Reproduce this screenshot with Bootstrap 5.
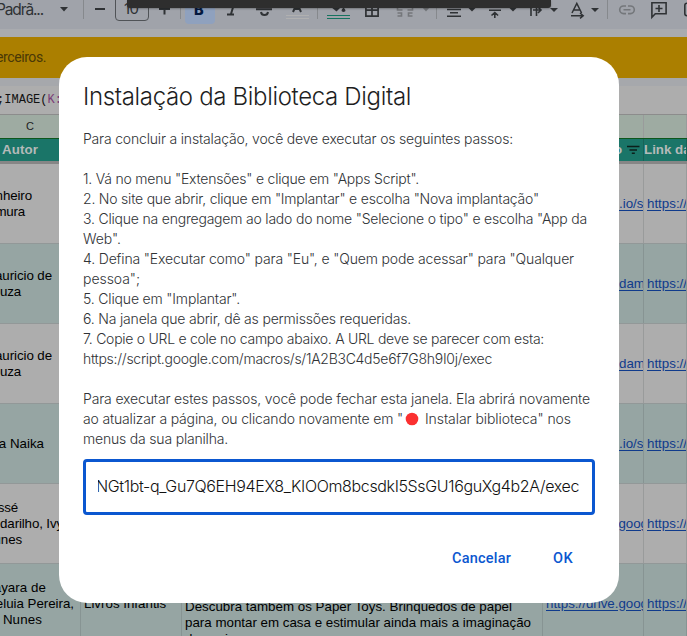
<!DOCTYPE html>
<html lang="pt-BR">
<head>
<meta charset="utf-8">
<title>Instalação da Biblioteca Digital</title>
<link href="https://cdn.jsdelivr.net/npm/bootstrap@5.3.0/dist/css/bootstrap.min.css" rel="stylesheet">
<style>
body{width:687px;height:636px;overflow:hidden;background:#adadad;font-family:"Liberation Sans",Arial,sans-serif;color:#000}
.sheet{width:687px;height:636px;overflow:hidden}
.sheet>div{flex:none}
.tools{height:29px;background:#a0a3aa}
.tools svg{display:block;flex:none}
.fontname{width:59px;font:15.500px/19px Inter,sans-serif;color:#2f3235;overflow:hidden;white-space:nowrap}
.fontname span{margin-left:-4px}
.fit{display:inline-block;white-space:pre}
.strip{height:8px;background:#a9abaf}
.notice{height:41px;background:#ab7f00;font:14px/41px Roboto,sans-serif;color:#493807}
.notice span{margin-left:-4px}
.strip2{height:8px;background:#a6a8ac}
.formula{height:28px;font:12px/29px "Liberation Mono",monospace;color:#111;background:#adadad}
.formula .fit{margin-left:-3px}
.range-ref{color:#7a3a75}
.grid-row{display:grid;grid-template-columns:81px 101px 361px 101px 43px;flex:none}
.grid-row>div{overflow:hidden;border-right:1px solid #999b9b;white-space:nowrap}
.letters{height:25px;border-top:1px solid #8c8c8c;background:#9eaba2;border-bottom:1px solid #0c571c;font-size:11px;line-height:23px;color:#222}
.letters span{margin-left:26px}
.heads{height:22px;background:#1a7568;font-weight:700;font-size:13.330px;line-height:21px;color:#b5bab9}
.heads>div{border-color:#176257}
.heads .fit{margin-left:2px}
.frozen{height:3px;background:#868686}
.data-row{height:80px;border-bottom:1px solid #929898;font-size:13.33px;line-height:16px}
.data-row>div{display:flex;flex-direction:column;justify-content:center}
.teal-row{background:#96a5a3}
.teal-row>div{border-color:#879493}
.author span{margin-left:-16px;align-self:flex-start}
.url{color:#103b8c;text-decoration:underline;text-underline-offset:2px;padding-left:3px}
.url span{align-self:flex-start}
.tail{padding-left:76px}
.desc{padding:35px 0 0 3px;justify-content:flex-start!important}
.desc span{align-self:flex-start}
.tip{width:424px;height:8px;left:127px;top:0;background:#2e2e2e;border-radius:0 0 3px 3px;box-shadow:0 1px 2px #0004}
.dialog-box{left:59px;top:57px;width:560px;height:546px;border-radius:28px;background:#fff;padding:24px;font-family:Inter,Roboto,sans-serif;color:#303336}
.dialog-title{font-size:24px;line-height:32px;font-weight:300;color:#1f1f1f;margin-bottom:16px}
.steps{font-size:14px;line-height:20px;font-weight:300}
.steps>div{height:20px;white-space:nowrap}
.address{height:56px;margin-top:10px;border:3px solid #0b57d0;border-radius:4px;padding:0 13px 0 12px;font-size:16px;font-weight:300;line-height:49px;color:#111}
.address>div{overflow:hidden;justify-content:flex-end}
.actions{margin-top:24px;gap:42px;padding-right:22px;font:500 14.500px/40px Roboto,sans-serif;color:#0b57d0}
</style>
<script src="https://cdn.jsdelivr.net/npm/bootstrap@5.3.0/dist/js/bootstrap.bundle.min.js"></script>
</head>
<body class="position-relative">
<div class="sheet d-flex flex-column">
  <div class="tools d-flex">
    <div class="fontname"><span class="fit" data-w="47">Padrã...</span></div>
    <svg width="125" height="29" viewBox="59 0 125 29" fill="none" stroke="#2f3235" stroke-width="2"><path d="M60 7h8l-4 4.500z" fill="#2f3235" stroke="none"/><path d="M83.500 0v19M180.500 0v19" stroke="#86898d" stroke-width="1"/><path d="M95 9h10M159 9h11M164.500 3.500v11"/><path d="M115.500 0v17q0 3.500 3.500 3.500h26q3.500 0 3.500-3.500V0" stroke="#505357" stroke-width="1"/><text x="124" y="14" font-family="Inter" font-size="15" letter-spacing="-.7" fill="#2f3235" stroke="none">10</text></svg>
    <svg width="72" height="29" viewBox="184 0 72 29"><rect x="185" y="-6" width="30" height="30" rx="4" fill="#8fa1be"/><text x="194" y="15" font-family="Inter" font-weight="800" font-size="14.500" fill="#04183f">B</text><path d="M227 14.500h7M231 14l3-10" stroke="#2f3235" stroke-width="2" fill="none"/></svg>
    <svg width="62" height="29" viewBox="256 0 62 29" fill="none" stroke="#2f3235" stroke-width="2"><path d="M256 9.200h16M261 12q.500 3 3.500 3t3.500-3"/><path d="M293 12l4-9 4 9M294.500 9h5"/><path d="M286 15.500h23M286 18.500h23" stroke="#b0b0b0" stroke-width="1"/><path d="M317.500 0v19" stroke="#86898d" stroke-width="1"/></svg>
    <svg width="122" height="29" viewBox="318 0 122 29" fill="none" stroke="#2f3235" stroke-width="1.700"><path d="M331 7h10l-4.500 4.500z" fill="#2f3235" stroke="none"/><path d="M343.500 7.500q4 4 0 4.500q-4-.5 0-4.500z" fill="#2f3235" stroke="none"/><path d="M327 15.500h23M327 18.500h23" stroke="#15735f" stroke-width="1.200"/><path d="M365.900 3v13.200h12.200V3M372 3v13M366 10.200h12"/><g stroke="#74777b"><path d="M397.500 8v2h5M412.500 8v2h-5M397.500 16h4v-3h-4M412.500 16h-4v-3h4" stroke-width="1.600"/></g><path d="M422 7h8l-4 4.500z" fill="#74777b" stroke="none"/><path d="M436.500 0v19" stroke="#86898d" stroke-width="1"/></svg>
    <svg width="247" height="29" viewBox="440 0 247 29" fill="none" stroke="#2f3235" stroke-width="1.600"><path d="M447 9.500h14M450 12.800h8M447 16.300h14"/><path d="M489 10.200h12M494.800 18v-5M491.500 15.500l3.300-3 3.300 3"/><path d="M531 3v13M536.500 6v10M533 10h8M538 7l3 3-3 3"/><path d="M572 13l4.800-9.500 4.800 9.500M573.500 10h6.500M571 15.700h12M580 13l3.200 2.700-3.200 2.700" stroke-width="1.500"/><path d="M468 7.500h8l-4 4zM509 7.500h8l-4 4zM550 8h8l-4 4zM591 8h8l-4 4z" fill="#2f3235" stroke="none"/><path d="M607.500 0v19" stroke="#86898d" stroke-width="1"/><path d="M626 6h-2.500a3.700 3.700 0 0 0 0 7.600H626M628 6h2.500a3.700 3.700 0 0 1 0 7.600H628M623.500 9.800h7" stroke="#74777b"/><path d="M651.900 17.200V2.800h14.200v11H655.300zM655.500 8.500h7M659 5v7"/><path d="M690 3.300h-3q-2.200 0-2.200 2.200v8q0 2.200 2.200 2.200h3"/></svg>
  </div>
  <div class="strip"></div>
  <div class="notice"><span class="fit" data-w="50">erceiros.</span></div>
  <div class="strip2"></div>
  <div class="formula"><span class="fit" data-w="65">;IMAGE(<span class="range-ref">K:</span></span></div>
  <div class="grid-row letters"><div><span>C</span></div><div></div><div></div><div></div><div></div></div>
  <div class="grid-row heads"><div><span class="fit" data-w="36">Autor</span></div><div></div><div></div>
    <div class="d-flex"><span style="margin-left:71px;width:13px">o</span><svg width="13" height="21" stroke="#0c1f1b" stroke-width="1.400"><path d="M0 7.500h12.500M2.500 11h7.500M4.800 14.200h3"/></svg></div><div><span>Link da</span></div></div>
  <div class="frozen"></div>
  <div class="grid-row data-row"><div class="author"><span class="fit" data-w="48">Pinheiro</span><span class="fit" data-w="41">Kimura</span></div><div></div><div></div><div class="url tail"><span>.io/s</span></div><div class="url"><span>https://</span></div></div>
  <div class="grid-row data-row teal-row"><div class="author"><span class="fit" data-w="68">Mauricio de</span><span class="fit" data-w="37">Souza</span></div><div></div><div></div><div class="url tail"><span>dam</span></div><div class="url"><span>https://</span></div></div>
  <div class="grid-row data-row"><div class="author"><span class="fit" data-w="68">Mauricio de</span><span class="fit" data-w="37">Souza</span></div><div></div><div></div><div class="url tail"><span>dam</span></div><div class="url"><span>https://</span></div></div>
  <div class="grid-row data-row teal-row"><div class="author"><span class="fit" data-w="60">Lua Naika</span></div><div></div><div></div><div class="url tail"><span>.io/s</span></div><div class="url"><span>https://</span></div></div>
  <div class="grid-row data-row"><div class="author"><span class="fit" data-w="34">Jossé</span><span class="fit" data-w="79">Andarilho, Ivy</span><span class="fit" data-w="38">Nunes</span></div><div></div><div></div><div class="url"><span class="fit" data-w="102">https://drive.goog</span></div><div class="url"><span>https://</span></div></div>
  <div class="grid-row data-row teal-row"><div class="author"><span class="fit" data-w="62">Nayara de</span><span class="fit" data-w="90">Aleluia Pereira,</span><span class="fit" data-w="58">da Nunes</span></div><div style="padding-left:3px"><span>Livros Infantis</span></div>
    <div class="desc"><span class="fit" data-w="327">Descubra também os Paper Toys. Brinquedos de papel</span><span class="fit" data-w="346">para montar em casa e estimular ainda mais a imaginação</span><span>dos pais.</span></div><div class="url"><span class="fit" data-w="102">https://drive.goog</span></div><div class="url"><span>https://</span></div></div>
</div>
<div class="tip position-absolute"></div>
<div class="dialog-box position-absolute" role="dialog">
  <div class="dialog-title"><span class="fit" data-w="328">Instalação da Biblioteca Digital</span></div>
  <div class="steps">
    <div><span class="fit" data-w="430">Para concluir a instalação, você deve executar os seguintes passos:</span></div>
    <div></div>
    <div><span class="fit" data-w="336">1. Vá no menu "Extensões" e clique em "Apps Script".</span></div>
    <div><span class="fit" data-w="456">2. No site que abrir, clique em "Implantar" e escolha "Nova implantação"</span></div>
    <div><span class="fit" data-w="504">3. Clique na engregagem ao lado do nome "Selecione o tipo" e escolha "App da</span></div>
    <div><span class="fit" data-w="38">Web".</span></div>
    <div><span class="fit" data-w="491">4. Defina "Executar como" para "Eu", e "Quem pode acessar" para "Qualquer</span></div>
    <div><span class="fit" data-w="57">pessoa";</span></div>
    <div><span class="fit" data-w="157">5. Clique em "Implantar".</span></div>
    <div><span class="fit" data-w="328">6. Na janela que abrir, dê as permissões requeridas.</span></div>
    <div><span class="fit" data-w="461">7. Copie o URL e cole no campo abaixo. A URL deve se parecer com esta:</span></div>
    <div><span class="fit" data-w="409">https://script.google.com/macros/s/1A2B3C4d5e6f7G8h9I0j/exec</span></div>
    <div></div>
    <div><span class="fit" data-w="507">Para executar estes passos, você pode fechar esta janela. Ela abrirá novamente</span></div>
    <div class="d-flex align-items-center"><span class="fit" data-w="320">ao atualizar a página, ou clicando novamente em "</span><svg width="22" height="14"><circle cx="9" cy="7" r="6.300" fill="#fb3030"/></svg><span class="fit" data-w="146">Instalar biblioteca" nos</span></div>
    <div><span class="fit" data-w="145">menus da sua planilha.</span></div>
  </div>
  <div class="address"><div class="d-flex"><span class="fit" data-w="483">NGt1bt-q_Gu7Q6EH94EX8_KIOOm8bcsdkI5SsGU16guXg4b2A/exec</span></div></div>
  <div class="actions d-flex justify-content-end"><span class="fit" data-w="59">Cancelar</span><span class="fit" data-w="20">OK</span></div>
</div>
<script>
// Tracks each text run so that it fills its nominal width.
document.querySelectorAll('.fit').forEach(function(el){
  var w=el.getBoundingClientRect().width,n=el.textContent.length;
  el.style.letterSpacing=((+el.dataset.w-w)/n)+'px';
});
</script>
</body>
</html>
